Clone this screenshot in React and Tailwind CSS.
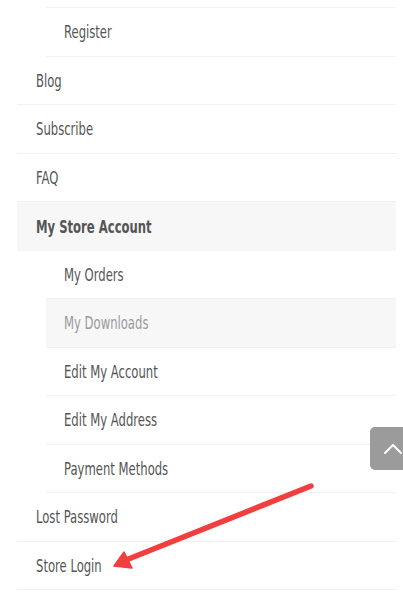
import React from "react";

const font = { fontFamily: '"DejaVu Sans Condensed","Liberation Sans Narrow",Roboto,sans-serif' };

function Row({ children, sub, bg, muted, bold, last }) {
  return (
    <div
      className={`flex h-[48.5px] items-center pt-[2px] ${sub ? "pl-[18px]" : "pl-[19px]"} ${bg ? "bg-[#f7f7f7]" : ""} ${last ? "" : "border-b border-[#f1f1f1]"}`}
    >
      <span
        className={`inline-block origin-left scale-x-[0.76] whitespace-nowrap text-[17px] ${muted ? "text-[#9a9a9a]" : "text-[#555555]"} ${bold ? "font-bold text-[#4a4a4a]" : ""}`}
      >
        {children}
      </span>
    </div>
  );
}

export default function App() {
  return (
    <div className="relative h-[600px] w-[403px] overflow-hidden bg-white" style={font}>
      <div className="ml-[17px] mr-[7px]">
        <div className="ml-[29px]">
          <div className="h-[8px] border-b border-[#f1f1f1]" />
          <Row sub>Register</Row>
        </div>
        <Row>Blog</Row>
        <Row>Subscribe</Row>
        <Row>FAQ</Row>
        <Row bg bold last>My Store Account</Row>
        <div className="ml-[29px]">
          <Row sub>My Orders</Row>
          <Row sub bg muted>My Downloads</Row>
          <Row sub>Edit My Account</Row>
          <Row sub>Edit My Address</Row>
          <Row sub>Payment Methods</Row>
        </div>
        <Row>Lost Password</Row>
        <Row>Store Login</Row>
      </div>

      <button className="absolute left-[370px] top-[427px] flex h-[43px] w-[44px] items-center justify-center rounded-[5px] bg-[#9b9b9b]">
        <svg width="20" height="12" viewBox="0 0 20 12" className="ml-[2px]">
          <path d="M2 10 L10 2 L18 10" fill="none" stroke="white" strokeWidth="2" strokeLinecap="round" strokeLinejoin="round" />
        </svg>
      </button>

      <svg className="absolute left-0 top-0" width="403" height="600" viewBox="0 0 403 600">
        <line x1="311" y1="486" x2="126" y2="560" stroke="#f23e3e" strokeWidth="5.5" strokeLinecap="round" />
        <polygon points="114,566 124,552 132,568" fill="#f23e3e" stroke="#f23e3e" strokeWidth="1.5" strokeLinejoin="round" />
      </svg>
    </div>
  );
}
